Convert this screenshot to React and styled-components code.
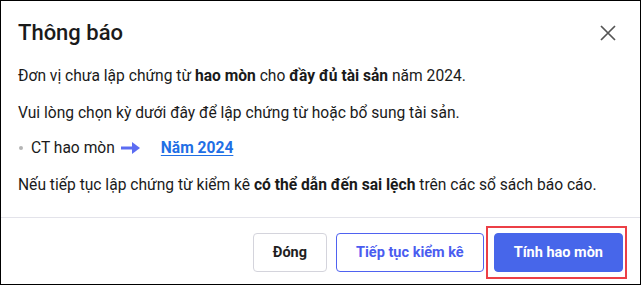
import styled, { createGlobalStyle } from "styled-components";

const GlobalStyle = createGlobalStyle`
  html, body {
    margin: 0;
    padding: 0;
    background: #fff;
  }
  body {
    font-family: Roboto, "Liberation Sans", Arial, sans-serif;
    color: #212121;
  }
`;

const Dialog = styled.div`
  box-sizing: border-box;
  width: 641px;
  height: 285px;
  border: 1px solid #000;
  background: #fff;
  display: flex;
  flex-direction: column;
`;

const Header = styled.header`
  display: flex;
  align-items: center;
  justify-content: space-between;
  padding: 18px 23px 0 17px;
  height: 28px;
`;

const Title = styled.h2`
  margin: 0;
  font-size: 22px;
  line-height: 28px;
  font-weight: 500;
  color: #1a1a1a;
`;

const CloseButton = styled.button`
  border: 0;
  background: none;
  padding: 0;
  width: 18px;
  height: 18px;
  display: flex;
  align-items: center;
  justify-content: center;
  cursor: pointer;
`;

const Body = styled.div`
  flex: 1;
  padding: 18px 17px 0;
`;

const Text = styled.p`
  margin: 0 0 ${(p) => p.$gap ?? 15}px;
  font-size: 15.6px;
  line-height: 22px;
  color: #1a1a1a;

  b {
    font-weight: 700;
  }
`;

const ListRow = styled.div`
  display: flex;
  align-items: center;
  font-size: 15.6px;
  line-height: 22px;
  margin: 0 0 15px;
  color: #1a1a1a;
`;

const Dot = styled.span`
  width: 4px;
  height: 4px;
  border-radius: 50%;
  background: #b5b5b5;
  margin: 0 8px 0 1px;
`;

const Arrow = styled.span`
  display: flex;
  margin: 0 20px 0 6px;
`;

const YearLink = styled.a`
  color: #1f6fe5;
  font-weight: 700;
  text-decoration: underline;
  text-underline-offset: 2px;
  cursor: pointer;
`;

const Footer = styled.footer`
  border-top: 1px solid #e3e3ea;
  display: flex;
  justify-content: flex-end;
  gap: 9px;
  padding: 15px 17px 12px;
`;

const Button = styled.button`
  box-sizing: border-box;
  height: 39px;
  padding: 0 19px;
  border-radius: 4px;
  font-family: inherit;
  font-size: 14.5px;
  font-weight: 700;
  cursor: pointer;
  border: 1px solid ${(p) => (p.$variant === "outline" ? "#4f62f0" : p.$variant === "primary" ? "#4766ea" : "#d4d4dc")};
  background: ${(p) => (p.$variant === "primary" ? "#4766ea" : "#fff")};
  color: ${(p) => (p.$variant === "primary" ? "#fff" : p.$variant === "outline" ? "#4a5cf0" : "#1f1f1f")};
`;

const Highlight = styled.div`
  position: relative;
  display: flex;
  margin-left: 1px;

  &::after {
    content: "";
    position: absolute;
    top: -7px;
    bottom: -7px;
    left: -8px;
    right: -4px;
    border: 2px solid #ec3f46;
    pointer-events: none;
  }
`;

export default function App() {
  return (
    <>
      <GlobalStyle />
      <Dialog>
        <Header>
          <Title>Thông báo</Title>
          <CloseButton aria-label="Đóng">
            <svg width="16" height="16" viewBox="0 0 16 16">
              <path d="M1 1 L15 15 M15 1 L1 15" stroke="#555" strokeWidth="1.7" fill="none" />
            </svg>
          </CloseButton>
        </Header>
        <Body>
          <Text>
            Đơn vị chưa lập chứng từ <b>hao mòn</b> cho <b>đầy đủ tài sản</b> năm 2024.
          </Text>
          <Text $gap={13}>Vui lòng chọn kỳ dưới đây để lập chứng từ hoặc bổ sung tài sản.</Text>
          <ListRow>
            <Dot />
            CT hao mòn
            <Arrow>
              <svg width="20" height="14" viewBox="0 0 20 14">
                <path d="M0 7 H16" stroke="#5b6cf2" strokeWidth="3" fill="none" />
                <path d="M11 1 L19 7 L11 13 Z" fill="#5b6cf2" />
              </svg>
            </Arrow>
            <YearLink>Năm 2024</YearLink>
          </ListRow>
          <Text $gap={0}>
            Nếu tiếp tục lập chứng từ kiểm kê <b>có thể dẫn đến sai lệch</b> trên các sổ sách báo cáo.
          </Text>
        </Body>
        <Footer>
          <Button>Đóng</Button>
          <Button $variant="outline">Tiếp tục kiểm kê</Button>
          <Highlight>
            <Button $variant="primary">Tính hao mòn</Button>
          </Highlight>
        </Footer>
      </Dialog>
    </>
  );
}
